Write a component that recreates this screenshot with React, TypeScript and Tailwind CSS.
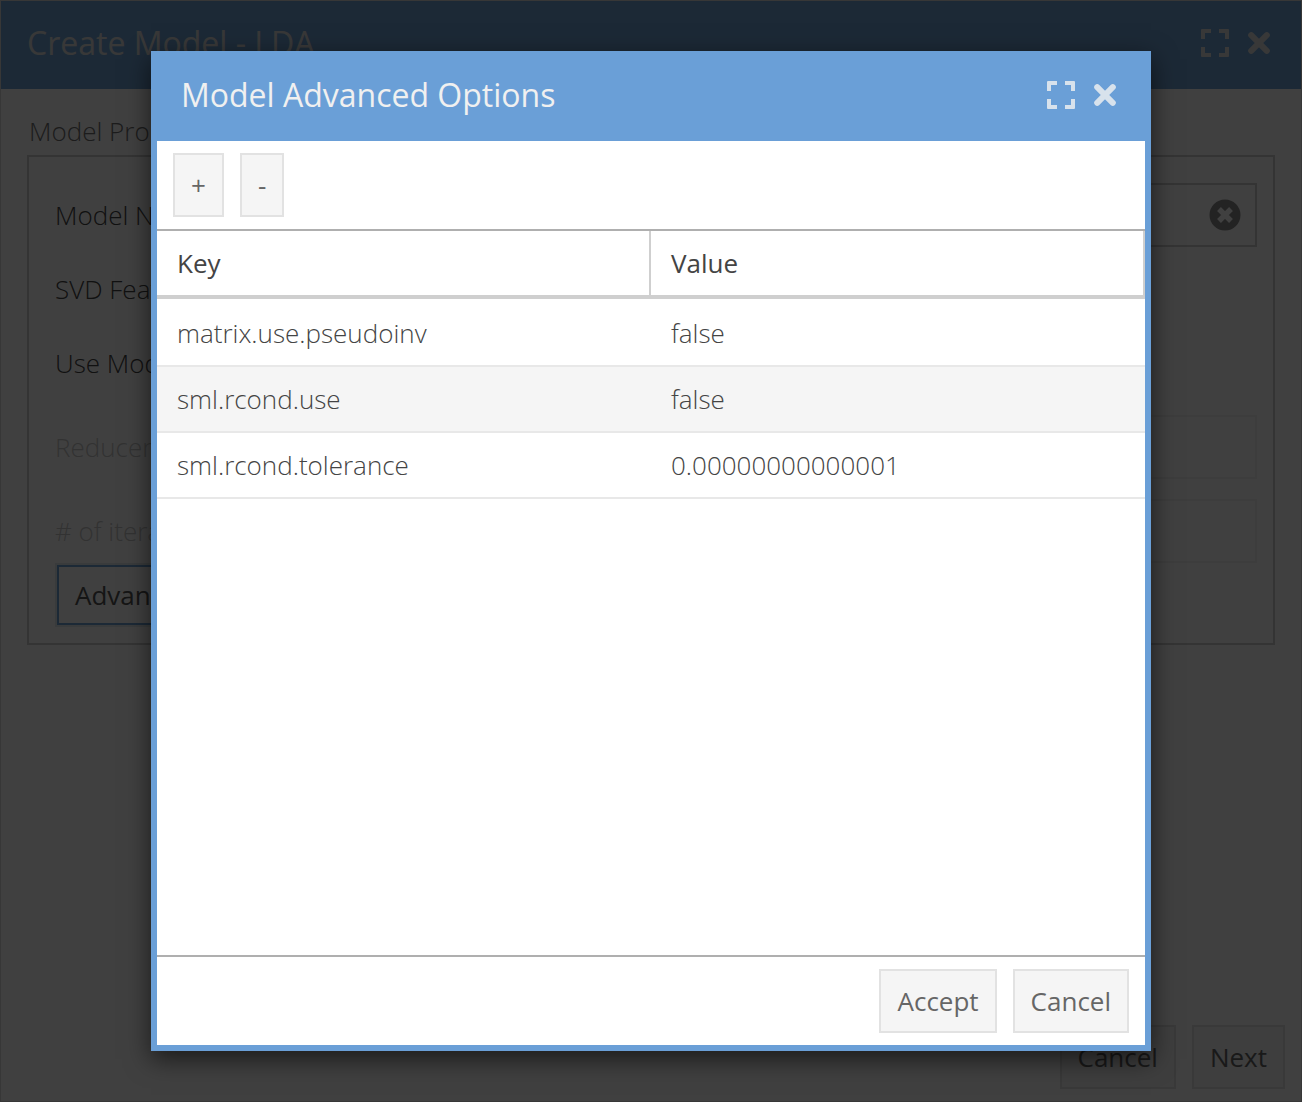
import type { ReactNode } from "react";

function MaximizeIcon() {
  return (
    <svg viewBox="0 0 28 28" className="size-7" fill="currentColor" aria-hidden="true">
      <path d="M1 0H10V4H4V10H0V1Q0 0 1 0ZM18 0H27Q28 0 28 1V10H24V4H18ZM0 18H4V24H10V28H1Q0 28 0 27ZM24 18H28V27Q28 28 27 28H18V24H24Z" />
    </svg>
  );
}

function CloseIcon() {
  return (
    <svg viewBox="0 0 22 22" className="size-[22px]" stroke="currentColor" strokeWidth="6" strokeLinecap="round" aria-hidden="true">
      <path d="M3.2 3.2L18.8 18.8M18.8 3.2L3.2 18.8" />
    </svg>
  );
}

function ClearIcon() {
  return (
    <svg viewBox="0 0 32 32" className="size-8" aria-hidden="true">
      <circle cx="16" cy="16" r="15.5" fill="#8c8c8c" />
      <path d="M10 10L22 22M22 10L10 22" stroke="#fff" strokeWidth="5.4" />
    </svg>
  );
}

function WindowTools() {
  return (
    <div className="flex items-center gap-[19px]">
      <button type="button" aria-label="Maximize"><MaximizeIcon /></button>
      <button type="button" aria-label="Close"><CloseIcon /></button>
    </div>
  );
}

function Button({ children }: { children: ReactNode }) {
  return (
    <button type="button" className="h-16 border-2 border-[#e2e2e2] bg-[#f5f5f5] px-4 text-[#666]">
      {children}
    </button>
  );
}

function Field({ id, label, disabled = false, clearable = false }: { id: string; label: string; disabled?: boolean; clearable?: boolean }) {
  return (
    <div className={disabled ? "flex h-16 items-center opacity-30" : "flex h-16 items-center"}>
      <label htmlFor={id} className="w-[300px] shrink-0">{label}</label>
      <div className="flex h-16 grow items-center border-2 border-[#cfcfcf] pr-[14px]">
        <input id={id} disabled={disabled} className="min-w-0 grow self-stretch px-3 outline-none" />
        {clearable && <button type="button" aria-label="Clear"><ClearIcon /></button>}
      </div>
    </div>
  );
}

const options = [
  { key: "matrix.use.pseudoinv", value: "false" },
  { key: "sml.rcond.use", value: "false" },
  { key: "sml.rcond.tolerance", value: "0.00000000000001" },
];

function CreateModelWindow() {
  return (
    <section aria-label="Create Model" className="flex grow flex-col border border-[#dcdcdc] bg-white">
      <header className="flex h-22 items-center justify-between bg-[#70a4d6] pr-[31px] pb-1 pl-[26px] text-[#e0e0e0]">
        <h1 className="text-[32px] font-normal">Create Model - LDA</h1>
        <WindowTools />
      </header>
      <div className="flex grow flex-col px-[26px] pt-6 text-[#444]">
        <h2 className="h-[42px] px-0.5 leading-9 text-[#707070]">Model Properties</h2>
        <form className="border-2 border-[#cfcfcf] px-4 pt-[26px] pb-4">
          <div className="pl-[10px]">
            <div className="flex flex-col gap-[10px]">
              <Field id="name" label="Model Name" clearable />
              <div className="flex h-16 items-center"><label htmlFor="svd" className="w-[300px]">SVD Features</label><input id="svd" type="checkbox" className="size-7" /></div>
              <div className="flex h-16 items-center"><label htmlFor="reduce" className="w-[300px]">Use Model Reducer</label><input id="reduce" type="checkbox" className="size-7" /></div>
            </div>
            <div className="flex flex-col gap-5 pt-5">
              <Field id="reducer" label="Reducer" disabled />
              <Field id="iterations" label="# of iterations" disabled />
            </div>
            <button type="button" className="block border-2 border-[#e4e9ee]">
              <span className="flex h-[60px] items-center border-2 border-[#70a4d6] px-4 font-normal text-[#555]">Advanced</span>
            </button>
          </div>
        </form>
      </div>
      <footer className="flex justify-end gap-4 p-3 pr-4 font-normal">
        <Button>Cancel</Button>
        <Button>Next</Button>
      </footer>
    </section>
  );
}

function AdvancedOptionsDialog() {
  return (
    <section role="dialog" aria-modal="true" aria-labelledby="dialog-title" className="flex grow flex-col bg-[#6a9fd7] px-1.5 pb-1.5 shadow-[0_8px_24px_rgba(0,0,0,0.6)]">
      <header className="flex h-[90px] items-center justify-between pr-[29px] pb-0.5 pl-6 text-[#d8e2ec]">
        <h2 id="dialog-title" className="text-[32px] font-normal text-[#f0f0f0]">Model Advanced Options</h2>
        <WindowTools />
      </header>
      <div className="flex grow flex-col bg-white font-normal">
        <div className="flex gap-4 border-b-2 border-[#afafaf] px-4 py-3">
          <Button>+</Button>
          <Button>-</Button>
        </div>
        <div className="grow">
          <table className="w-full table-fixed border-separate border-spacing-0 text-left text-[#444]">
            <thead>
              <tr>
                <th className="h-17 border-r-2 border-b-4 border-[#cfcfcf] px-5 py-0 font-normal">Key</th>
                <th className="h-17 border-r-2 border-b-4 border-[#cfcfcf] px-5 py-0 font-normal">Value</th>
              </tr>
            </thead>
            <tbody className="font-light">
              {options.map((option) => (
                <tr key={option.key} className="group even:bg-[#f5f5f5]">
                  <td className="h-[66px] border-b-2 border-b-[#e8e8e8] px-5 py-0 group-first:h-17 group-first:border-t-2 group-first:border-t-white">{option.key}</td>
                  <td className="h-[66px] border-b-2 border-b-[#e8e8e8] px-5 py-0 group-first:h-17 group-first:border-t-2 group-first:border-t-white">{option.value}</td>
                </tr>
              ))}
            </tbody>
          </table>
        </div>
        <footer className="flex justify-end gap-4 border-t-2 border-[#afafaf] px-4 py-3">
          <Button>Accept</Button>
          <Button>Cancel</Button>
        </footer>
      </div>
    </section>
  );
}

export default function App() {
  return (
    <main className="relative flex min-h-screen flex-col font-['Open_Sans',sans-serif] text-[26px] leading-9 font-light">
      <CreateModelWindow />
      <div className="absolute inset-0 flex bg-black/75 px-[151px] py-[51px]">
        <AdvancedOptionsDialog />
      </div>
    </main>
  );
}
